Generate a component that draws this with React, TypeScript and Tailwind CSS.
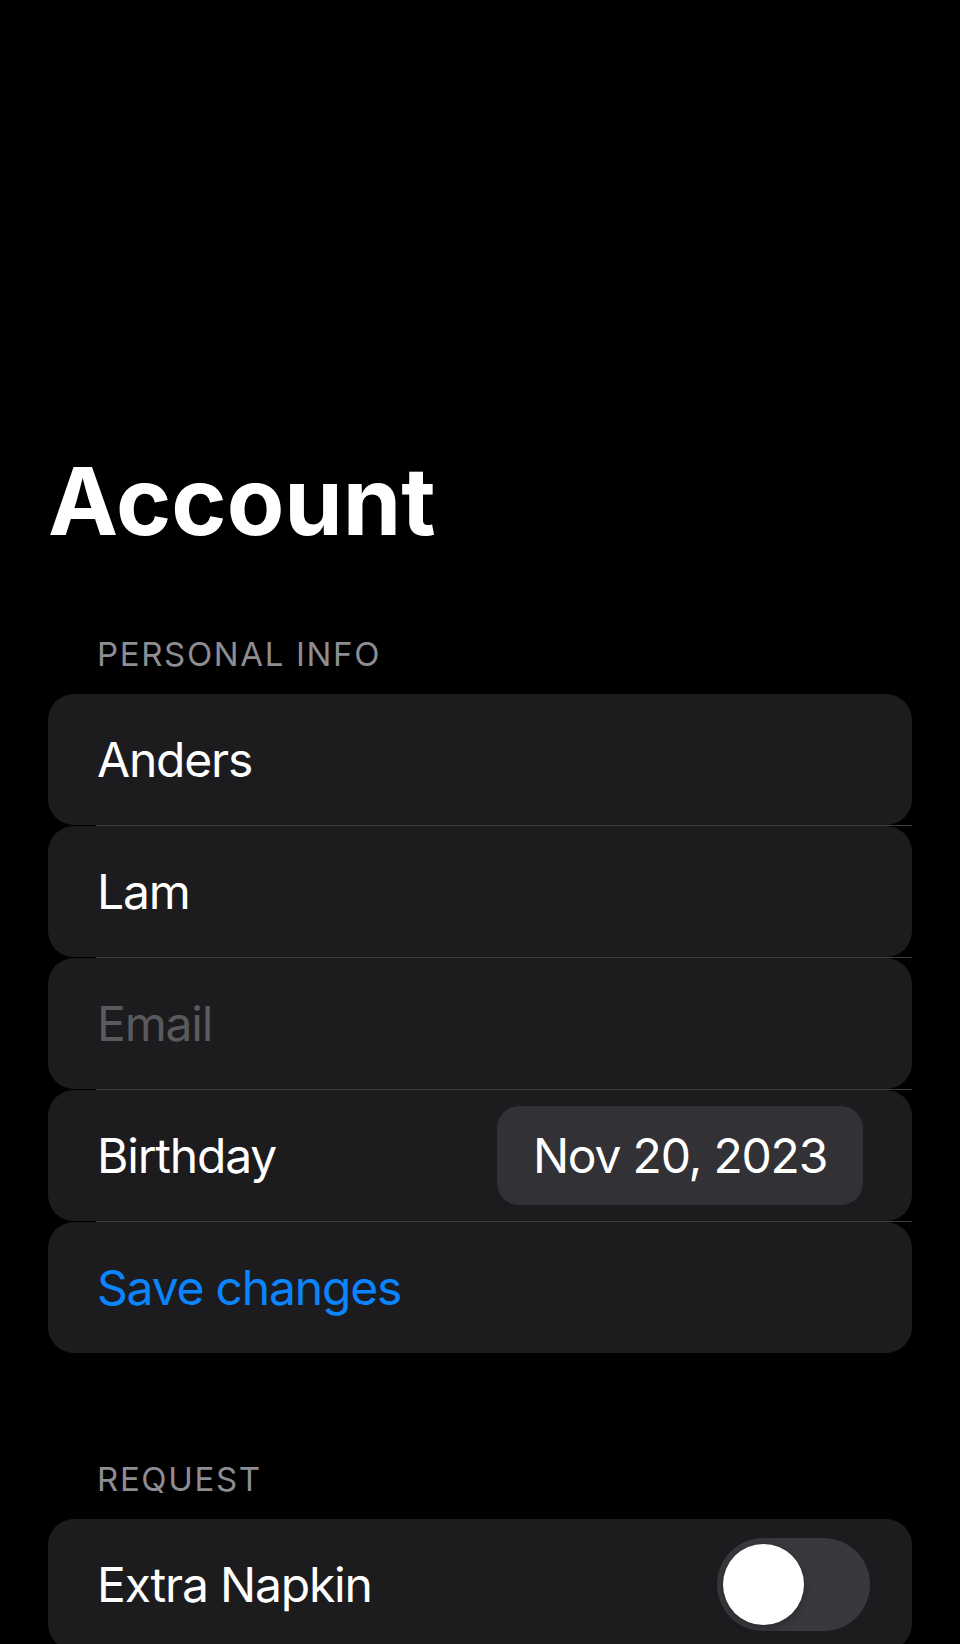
import React from 'react';

const rowText = 'text-[48px] leading-none tracking-[-0.025em]';

const Separator = () => <div className="ml-[48px] h-px bg-[#3d3d40]" />;

const Row = ({ children }: { children: React.ReactNode }) => (
  <div className="flex h-[131px] items-center justify-between rounded-[26px] bg-[#1c1c1e] pl-[49px] pr-[42px]">
    {children}
  </div>
);

const SectionHeader = ({ title }: { title: string }) => (
  <h2 className="px-[49px] text-[33px] leading-[33px] tracking-[0.05em] text-[#8d8d93]">{title}</h2>
);

export default function App() {
  return (
    <div className="min-h-[1644px] overflow-hidden bg-black font-[Inter,'Noto_Sans',sans-serif] text-white">
      <div className="px-[48px]">
        <h1 className="pt-[454px] text-[94px] font-bold leading-[94px]">Account</h1>

        <div className="mt-[90px]">
          <SectionHeader title="PERSONAL INFO" />
          <div className="mt-[23px] flex flex-col">
            <Row>
              <span className={rowText}>Anders</span>
            </Row>
            <Separator />
            <Row>
              <span className={rowText}>Lam</span>
            </Row>
            <Separator />
            <Row>
              <span className={`${rowText} text-[#5a5a5e]`}>Email</span>
            </Row>
            <Separator />
            <div className="flex h-[131px] items-center justify-between rounded-[26px] bg-[#1c1c1e] pl-[49px] pr-[49px]">
              <span className={rowText}>Birthday</span>
              <span className={`${rowText} flex h-[99px] w-[366px] items-center justify-center rounded-[22px] bg-[#323236]`}>
                Nov 20, 2023
              </span>
            </div>
            <Separator />
            <Row>
              <span className={`${rowText} text-[#0a84ff]`}>Save changes</span>
            </Row>
          </div>
        </div>

        <div className="mt-[110px]">
          <SectionHeader title="REQUEST" />
          <div className="mt-[23px] flex flex-col">
            <Row>
              <span className={rowText}>Extra Napkin</span>
              <span className="flex h-[93px] w-[153px] items-center rounded-full bg-[#39393d] px-[6px]">
                <span className="h-[81px] w-[81px] rounded-full bg-white shadow-[0_3px_8px_rgba(0,0,0,0.25),0_0_0_1px_rgba(0,0,0,0.05)]" />
              </span>
            </Row>
          </div>
        </div>
      </div>
    </div>
  );
}
